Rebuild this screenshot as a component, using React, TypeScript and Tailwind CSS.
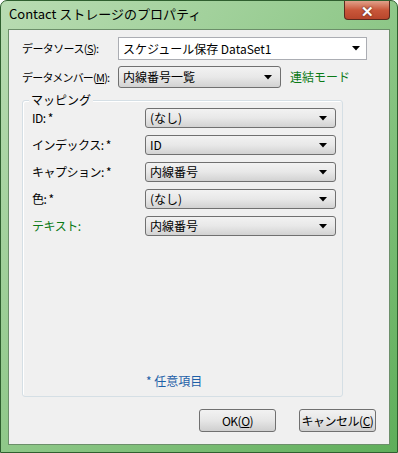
import React from "react";

const font = { fontFamily: '"Noto Sans CJK JP", "Noto Sans", sans-serif' };

const Arrow = () => (
  <svg width="8" height="5" viewBox="0 0 8 5" className="shrink-0">
    <path d="M0 0h8L4 4.5z" fill="#000" />
  </svg>
);

const Combo = ({ value, className }: { value: string; className: string }) => (
  <div
    className={`flex items-center justify-between rounded-[3px] border border-[#707070] bg-gradient-to-b from-[#f2f2f2] via-[#e8e8e8] to-[#d2d2d2] pl-[4px] pr-[8px] text-[12px] text-black ${className}`}
  >
    <span className="whitespace-nowrap leading-none">{value}</span>
    <Arrow />
  </div>
);

const MapRow = ({ label, value, green }: { label: string; value: string; green?: boolean }) => (
  <div className="flex h-[20px] items-center">
    <span
      className={`w-[113px] whitespace-nowrap text-[12px] tracking-[-0.5px] ${green ? "text-[#0b7a17]" : "text-black"}`}
    >
      {label}
    </span>
    <Combo value={value} className="h-[20px] w-[191px]" />
  </div>
);

const Btn = ({ children }: { children: React.ReactNode }) => (
  <div className="flex h-[23px] w-[77px] items-center justify-center whitespace-nowrap rounded-[3px] border border-[#707070] bg-gradient-to-b from-[#f2f2f2] via-[#e6e6e6] to-[#cfcfcf] text-[12px] tracking-[-0.5px] text-black">
    {children}
  </div>
);

export default function App() {
  return (
    <div className="h-[453px] w-[398px] bg-white" style={font}>
      <div className="flex h-full w-full flex-col rounded-t-[7px] border border-[#2f5f2f] bg-gradient-to-br from-[#b9dcb3] via-[#8fc889] to-[#5fae5a] px-[7px] pb-[7px]">
        {/* Title bar */}
        <div className="flex h-[28px] shrink-0 items-start justify-between">
          <span className="whitespace-nowrap pl-[1px] pt-[3px] text-[13px] text-black">Contact ストレージのプロパティ</span>
          <div className="flex h-[19px] w-[46px] items-center justify-center rounded-b-[4px] border border-t-0 border-[#5a2a1e] bg-gradient-to-b from-[#e0a08a] via-[#c9573a] to-[#b8462c]">
            <span className="text-[15px] font-bold leading-none text-white [text-shadow:0_0_2px_#3a1a10]">✕</span>
          </div>
        </div>

        {/* Client area */}
        <div className="flex flex-1 flex-col border border-[#6c8f6a] bg-[#f0f0f0] pl-[13px]">
          <div className="mt-[7px] flex h-[23px] items-center">
            <span className="w-[96px] whitespace-nowrap text-[11px] tracking-[-0.6px] text-black">
              データソース(<span className="underline">S</span>):
            </span>
            <div className="flex h-[23px] w-[249px] items-center justify-between border border-[#abadb3] bg-white pl-[4px] pr-[6px] text-[12px] text-black">
              <span className="whitespace-nowrap">スケジュール保存 DataSet1</span>
              <Arrow />
            </div>
          </div>

          <div className="mt-[6px] flex h-[22px] items-center">
            <span className="w-[96px] whitespace-nowrap text-[11px] tracking-[-0.8px] text-black">
              データメンバー(<span className="underline">M</span>):
            </span>
            <Combo value="内線番号一覧" className="h-[22px] w-[163px]" />
            <span className="ml-[9px] whitespace-nowrap text-[12px] text-[#0b7a17]">連結モード</span>
          </div>

          {/* Group box */}
          <div className="relative mt-[12px] flex h-[297px] w-[321px] flex-col rounded-[3px] border border-[#d5dfe5] pl-[9px] pt-[7px] shadow-[inset_1px_1px_0_#fff]">
            <span className="absolute left-[6px] top-[-9px] bg-[#f0f0f0] px-[2px] text-[12px] leading-[16px] text-black">
              マッピング
            </span>
            <div className="flex flex-col gap-[7px]">
              <MapRow label="ID: *" value="(なし)" />
              <MapRow label="インデックス: *" value="ID" />
              <MapRow label="キャプション: *" value="内線番号" />
              <MapRow label="色: *" value="(なし)" />
              <MapRow label="テキスト:" value="内線番号" green />
            </div>
            <div className="mb-[6px] mt-auto pl-[114px] text-[12px] text-[#1d5fa8]">* 任意項目</div>
          </div>

          <div className="mt-[12px] flex gap-[23px] pl-[177px]">
            <Btn>
              OK(<span className="underline">O</span>)
            </Btn>
            <Btn>
              キャンセル(<span className="underline">C</span>)
            </Btn>
          </div>
        </div>
      </div>
    </div>
  );
}
